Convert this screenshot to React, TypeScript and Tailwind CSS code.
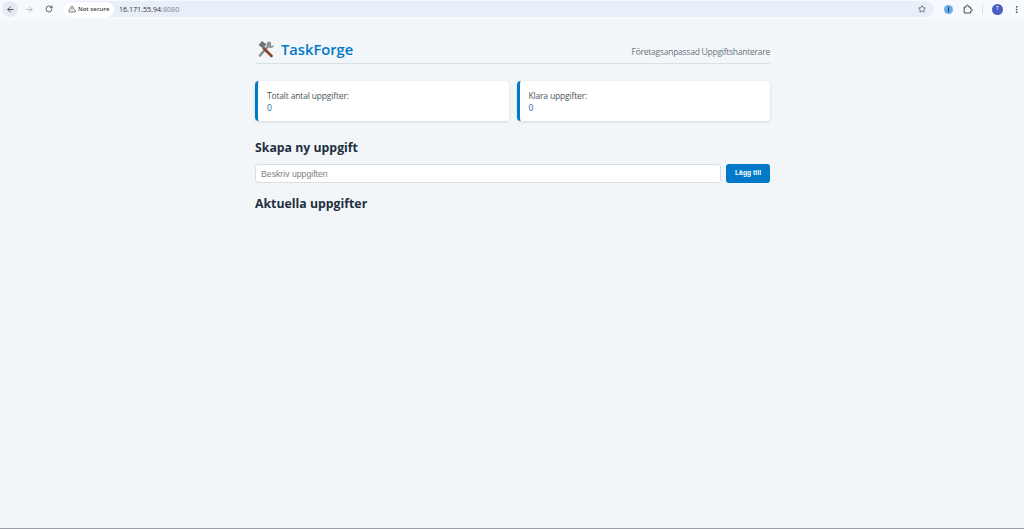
import { ArrowLeft, ArrowRight, RotateCw, TriangleAlert, Star, EllipsisVertical } from "lucide-react";

function Tools() {
  return (
    <svg width="18" height="18" viewBox="0 0 18 18" className="shrink-0">
      <path d="M3 15.5 L13 4" stroke="#8a8f96" strokeWidth="2.6" strokeLinecap="round" />
      <path d="M11 1.5 A3.6 3.6 0 0 0 10.5 6.5 L13 8 A3.6 3.6 0 0 0 17 5 L14.6 6 L13 4.4 L14 2 A4 4 0 0 0 11 1.5Z" fill="#8f949b" />
      <path d="M14.5 16 L7 8.5" stroke="#8a4a32" strokeWidth="2.8" strokeLinecap="round" />
      <path d="M1.5 5 L5 1 L9.5 4.5 L6 8.5 Z" fill="#6f747b" />
    </svg>
  );
}

function ExtPuzzle() {
  return (
    <svg width="10" height="10" viewBox="0 0 10 10" fill="none" stroke="#4a4e52" strokeWidth="1" strokeLinejoin="round" className="block">
      <path d="M1.2 3 H3.2 V2.2 A1.1 1.1 0 0 1 5.4 2.2 V3 H7.6 V5 H8.3 A1.1 1.1 0 0 1 8.3 7.2 H7.6 V9 H1.2 Z" />
    </svg>
  );
}

function Stat({ label }: { label: string }) {
  return (
    <div className="flex-1 h-10 rounded-[4px] border-l-[3px] border-[#0079c9] bg-white pl-[9px] pt-[9px] shadow-[0_1px_3px_rgba(0,0,0,0.12)] text-[8.5px] tracking-[-0.17px] leading-[12px]">
      <div className="text-[#4a5560]">{label}</div>
      <div className="text-[#1a6a9f]">0</div>
    </div>
  );
}

export default function App() {
  return (
    <div className="flex h-[529px] flex-col overflow-hidden border-b border-[#9a9ca6] bg-[#f2f6f9] font-['Open_Sans','Noto_Sans',sans-serif]">
      <header className="flex h-[20px] shrink-0 items-center bg-[#f6f9fd] pb-[2px]">
        <div className="ml-[2px] flex h-4 w-4 items-center justify-center rounded-full bg-[#e6ebf3]">
          <ArrowLeft size={9} strokeWidth={2.4} color="#3f4347" />
        </div>
        <ArrowRight size={9} strokeWidth={2} color="#a6aab0" className="ml-[7px]" />
        <RotateCw size={8} strokeWidth={2.4} color="#3f4347" className="ml-[11px]" />
        <div className="ml-[10px] flex h-[16px] w-[871px] shrink-0 items-center rounded-full bg-[#e9eff9]">
          <div className="flex h-[15px] w-[51px] items-center rounded-full bg-white pl-[5px] text-[6px] font-semibold text-[#3c4043]">
            <TriangleAlert size={8} strokeWidth={2} className="mr-[2px] shrink-0" />
            <span className="whitespace-nowrap">Not secure</span>
          </div>
          <span className="ml-[5px] text-[7.1px] text-[#2f3337]">
            16.171.55.94<span className="text-[#80858c]">:8080</span>
          </span>
          <Star size={8} strokeWidth={2} color="#3f4347" className="ml-auto mr-[8px]" />
        </div>
        <div className="ml-[10px] flex h-[9px] w-[9px] items-center justify-center rounded-full bg-[#6aaee8]">
          <div className="h-[5px] w-[1.5px] bg-[#1b3a5c]" />
        </div>
        <span className="ml-[10px]"><ExtPuzzle /></span>
        <div className="ml-[9px] h-[9px] w-px bg-[#d6deea]" />
        <div className="ml-[9px] flex h-[11px] w-[11px] items-center justify-center rounded-full bg-[#4a5fbf] text-[5px] text-white">T</div>
        <EllipsisVertical size={9} strokeWidth={2.4} color="#3f4347" className="ml-[9px]" />
      </header>
      <main className="ml-[255px] w-[515px] pt-[19px]">
        <div className="flex h-[25px] items-start justify-between border-b border-[#d8dfe6]">
          <div className="flex items-center gap-[6px]">
            <span className="ml-[2px]"><Tools /></span>
            <h1 className="text-[14.7px] leading-5 font-semibold text-[#0079c9]">TaskForge</h1>
          </div>
          <p className="pt-[6px] text-[8.5px] leading-[14px] tracking-[-0.25px] text-[#6a747d]">Företagsanpassad Uppgiftshanterare</p>
        </div>
        <div className="mt-[17px] flex gap-2">
          <Stat label="Totalt antal uppgifter:" />
          <Stat label="Klara uppgifter:" />
        </div>
        <h2 className="mt-[17px] text-[12.3px] leading-[20px] font-bold text-[#1f2f3f]">Skapa ny uppgift</h2>
        <div className="mt-[6px] flex gap-[5px]">
          <input
            readOnly
            placeholder="Beskriv uppgiften"
            className="h-[19px] flex-1 rounded-[3px] border border-[#d8dfe6] bg-white px-[5px] font-['Liberation_Sans',sans-serif] text-[8.7px] outline-none placeholder:text-[#808080]"
          />
          <button className="h-[19px] w-[44px] rounded-[3px] bg-[#0079c9] font-['Liberation_Sans',sans-serif] text-[6.8px] font-bold text-white">Lägg till</button>
        </div>
        <h2 className="mt-[11px] text-[12.3px] leading-[20px] font-bold text-[#1f2f3f]">Aktuella uppgifter</h2>
      </main>
    </div>
  );
}
